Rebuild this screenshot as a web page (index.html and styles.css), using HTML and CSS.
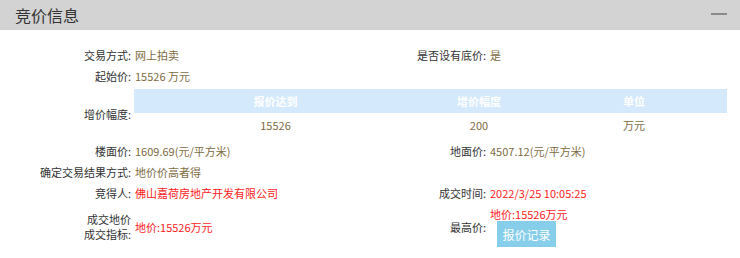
FILE: index.html
```html
<!DOCTYPE html>
<html lang="zh-CN">
<head>
<meta charset="UTF-8">
<meta name="viewport" content="width=device-width, initial-scale=1.0">
<title>竞价信息</title>
<link rel="stylesheet" href="styles.css">
</head>
<body>
    <div class="panel">
        <div class="panel_head">
            <span class="panel_title">竞价信息</span>
            <span class="panel_toggle"></span>
        </div>

        <div class="info_grid">
            <div class="lbl">交易方式:</div>
            <div class="val">网上拍卖</div>
            <div class="lbl">是否设有底价:</div>
            <div class="val">是</div>

            <div class="lbl">起始价:</div>
            <div class="val">15526 万元</div>
            <div class="lbl"></div>
            <div class="val"></div>

            <div class="lbl lbl_mid">增价幅度:</div>
            <div class="step_table">
                <div class="th">报价达到</div>
                <div class="th">增价幅度</div>
                <div class="th">单位</div>
                <div class="td">15526</div>
                <div class="td">200</div>
                <div class="td">万元</div>
            </div>

            <div class="lbl">楼面价:</div>
            <div class="val">1609.69(元/平方米)</div>
            <div class="lbl">地面价:</div>
            <div class="val">4507.12(元/平方米)</div>

            <div class="lbl">确定交易结果方式:</div>
            <div class="val">地价价高者得</div>
            <div class="lbl"></div>
            <div class="val"></div>

            <div class="lbl">竞得人:</div>
            <div class="val red">佛山嘉荷房地产开发有限公司</div>
            <div class="lbl">成交时间:</div>
            <div class="val red">2022/3/25 10:05:25</div>

            <div class="lbl lbl_two last_row">成交地价<br>成交指标:</div>
            <div class="val red last_row">地价:15526万元</div>
            <div class="lbl last_row">最高价:</div>
            <div class="val last_row">
                <div class="red top_price">地价:15526万元</div>
                <button class="record_btn">报价记录</button>
            </div>
        </div>
    </div>
</body>
</html>
```

FILE: styles.css
```css
body{
    margin: 0px;
    font-family: "Noto Sans CJK SC", "Noto Sans", sans-serif;
    font-size: 11px;
    color: #333;
    background: #fff;
}
.panel_head{
    height: 30px;
    background-color: #d3d3d3;
    display: flex;
    align-items: center;
    justify-content: space-between;
    padding: 0 13px 0 15px;
}
.panel_title{
    font-size: 16px;
    color: #333;
    line-height: 30px;
}
.panel_toggle{
    width: 16px;
    height: 2px;
    background-color: #8a8a8a;
    margin-bottom: 3px;
}
.info_grid{
    display: grid;
    grid-template-columns: 135px 221px 134px 1fr;
    padding: 15px 13px 0 0;
    line-height: 21px;
}
.lbl{
    text-align: right;
    padding-right: 4px;
    color: #333;
    white-space: nowrap;
}
.val{
    color: #7d6b42;
    white-space: nowrap;
}
.red{
    color: #ff1a1a;
}
.lbl_mid{
    align-self: center;
}
.step_table{
    grid-column: 2 / 5;
    display: grid;
    grid-template-columns: 283px 124px 1fr;
    margin: 2px 0 3px -1px;
    text-align: center;
}
.th{
    background-color: #d4e9fc;
    color: #fff;
    font-weight: bold;
    line-height: 24px;
}
.td{
    color: #7d6b42;
    line-height: 25px;
}
.last_row{
    align-self: center;
    margin-top: 3px;
}
.lbl_two{
    line-height: 15px;
}
.top_price{
    line-height: 14px;
}
.record_btn{
    display: block;
    width: 59px;
    height: 26px;
    border: none;
    background-color: #87ceeb;
    color: #fff;
    font-family: inherit;
    font-size: 12px;
    padding: 0;
    margin: 0 0 0 7px;
    cursor: pointer;
}
```
